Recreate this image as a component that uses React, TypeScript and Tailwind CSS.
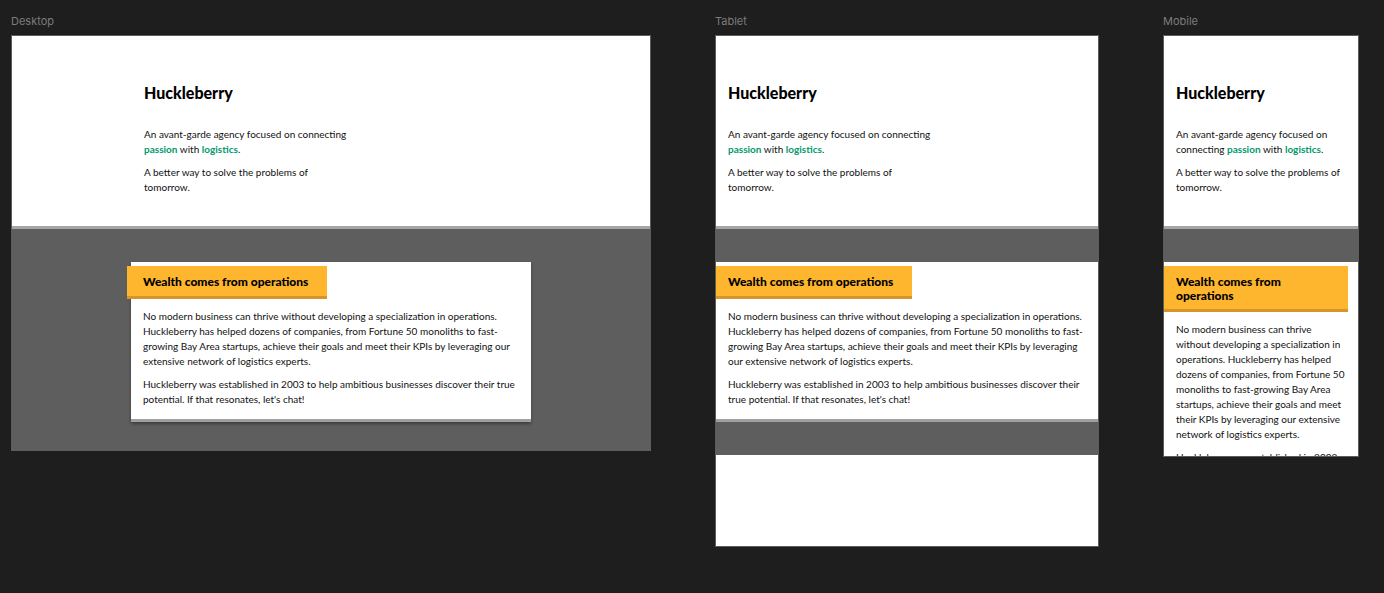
import React from 'react';

type Variant = 'desktop' | 'tablet' | 'mobile';

const FRAMES: { label: string; variant: Variant; size: string }[] = [
  { label: 'Desktop', variant: 'desktop', size: 'w-[640px] h-[416px]' },
  { label: 'Tablet', variant: 'tablet', size: 'w-[384px] h-[512px]' },
  { label: 'Mobile', variant: 'mobile', size: 'w-[196px] h-[422px]' },
];

function Green({ children }: { children: React.ReactNode }) {
  return <span className="font-bold text-[#00996b]">{children}</span>;
}

// one page of the site, drawn at half scale inside a canvas frame
function Page({ variant }: { variant: Variant }) {
  const isDesktop = variant === 'desktop';
  return (
    <div className="font-['Lato','Liberation_Sans',sans-serif] text-[#111]">
      <section className="bg-white pt-[45px] pb-[31px]">
        <div className={isDesktop ? 'mx-auto w-[400px] px-[13px]' : 'px-[12px]'}>
          <h1 className="mb-[22px] text-[16px] leading-[24px] font-black text-black">Huckleberry</h1>
          <p className="mb-[8px] max-w-[206px] text-[10px] leading-[15px]">
            An avant-garde agency focused on connecting <Green>passion</Green> with <Green>logistics</Green>.
          </p>
          <p className="max-w-[206px] text-[10px] leading-[15px]">A better way to solve the problems of tomorrow.</p>
        </div>
      </section>

      <section className="border-t-[3px] border-[#a6a6a6] bg-[#5e5e5e] py-[33px]">
        <div
          className={
            isDesktop
              ? 'mx-auto w-[400px] border-b-[3px] border-[#a0a0a0] bg-white pt-[4px] pb-[12px] shadow-[0_2px_3px_rgba(0,0,0,0.35)]'
              : 'border-b-[3px] border-[#a0a0a0] bg-white pt-[4px] pb-[12px]'
          }
        >
          <div
            className={
              variant === 'mobile'
                ? 'ml-[-4px] w-[188px] border-b-[3px] border-[#d6952a] bg-[#feb62f] pt-[9px] pr-4 pb-[6px] pl-4'
                : 'ml-[-4px] inline-block border-b-[3px] border-[#d6952a] bg-[#feb62f] pt-[9px] pr-[19px] pb-[7px] pl-4'
            }
          >
            <h2 className="text-[12px] leading-[14px] font-black text-black">Wealth comes from operations</h2>
          </div>
          <div className="mt-[10px] px-[12px] text-[10px] leading-[15px]">
            <p className="mb-[8px]">
              No modern business can thrive without developing a specialization in operations. Huckleberry has helped
              dozens of companies, from Fortune 50 monoliths to fast-growing Bay Area startups, achieve their goals and
              meet their KPIs by leveraging our extensive network of logistics experts.
            </p>
            <p>
              Huckleberry was established in 2003 to help ambitious businesses discover their true potential. If that
              resonates, let's chat!
            </p>
          </div>
        </div>
      </section>
    </div>
  );
}

export default function App() {
  return (
    <div className="min-h-screen w-full bg-[#1e1e1e] pt-[14px] pl-[11px]">
      <div className="flex items-start gap-[64px]">
        {FRAMES.map((f) => (
          <div key={f.label} className="flex flex-col">
            <div className="mb-[7px] h-[14px] font-['Inter','Liberation_Sans',sans-serif] text-[11px] leading-[14px] text-[#7c7c7c]">
              {f.label}
            </div>
            <div className={`${f.size} overflow-hidden border border-[#5c5c5c] bg-white`}>
              <Page variant={f.variant} />
            </div>
          </div>
        ))}
      </div>
    </div>
  );
}
